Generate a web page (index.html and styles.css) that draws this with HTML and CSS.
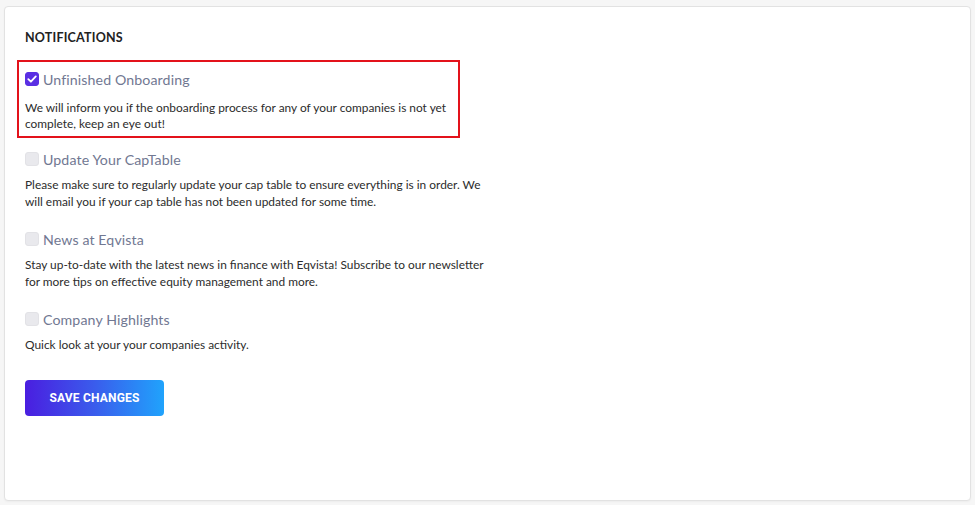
FILE: index.html
```html
<!DOCTYPE html>
<html lang="en">
<head>
<meta charset="utf-8">
<title>Notifications</title>
<link rel="stylesheet" href="styles.css">
</head>
<body>
<div class="card">
  <h2 class="heading">NOTIFICATIONS</h2>
  <div class="item item-marked">
    <label class="item-head">
      <span class="box box-checked">
        <svg viewBox="0 0 14 14" width="14" height="14"><path d="M3.3 7.2 L5.9 9.7 L10.8 4.4" fill="none" stroke="#fff" stroke-width="1.8" stroke-linecap="round" stroke-linejoin="round"/></svg>
      </span>
      <span class="title">Unfinished Onboarding</span>
    </label>
    <p class="desc desc-first">We will inform you if the onboarding process for any of your companies is not yet complete, keep an eye out!</p>
  </div>
  <div class="item">
    <label class="item-head">
      <span class="box"></span>
      <span class="title">Update Your CapTable</span>
    </label>
    <p class="desc">Please make sure to regularly update your cap table to ensure everything is in order. We will email you if your cap table has not been updated for some time.</p>
  </div>
  <div class="item">
    <label class="item-head">
      <span class="box"></span>
      <span class="title">News at Eqvista</span>
    </label>
    <p class="desc">Stay up-to-date with the latest news in finance with Eqvista! Subscribe to our newsletter for more tips on effective equity management and more.</p>
  </div>
  <div class="item item-last">
    <label class="item-head">
      <span class="box"></span>
      <span class="title">Company Highlights</span>
    </label>
    <p class="desc">Quick look at your your companies activity.</p>
  </div>
  <button class="save" type="button">SAVE CHANGES</button>
</div>
</body>
</html>
```

FILE: styles.css
```css
html, body {
  margin: 0;
  padding: 0;
}
body {
  background: #f6f6f6;
  font-family: Lato, "Open Sans", "Liberation Sans", sans-serif;
  width: 975px;
  height: 505px;
  overflow: hidden;
}
.card {
  box-sizing: border-box;
  margin: 6px 4px 0 4px;
  height: 495px;
  background: #fff;
  border: 1px solid #e2e2e2;
  border-radius: 4px;
  padding: 23px 20px 0 20px;
  box-shadow: 0 1px 2px rgba(0,0,0,0.04);
}
.heading {
  margin: 0 0 23px 0;
  font-size: 12.5px;
  line-height: 16px;
  font-weight: 700;
  color: #222;
  letter-spacing: 0.2px;
}
.item {
  position: relative;
  width: 466px;
  margin-bottom: 19px;
}
.item-marked {
  margin-bottom: 18px;
}
.item-marked::after {
  content: "";
  position: absolute;
  left: -8px;
  top: -9px;
  width: 439px;
  height: 74px;
  border: 2px solid #e3121b;
  pointer-events: none;
}
.item-last {
  margin-bottom: 26px;
}
.item-head {
  display: flex;
  align-items: center;
  gap: 4px;
  height: 20px;
}
.box {
  box-sizing: border-box;
  width: 14px;
  height: 14px;
  border-radius: 3px;
  background: #e9e9ed;
  border: 1px solid #e2e2e6;
  display: flex;
}
.box-checked {
  background: #5a2fe3;
  border-color: #5a2fe3;
}
.box-checked svg {
  margin: -1px;
}
.title {
  font-size: 14.2px;
  color: #717892;
  letter-spacing: 0.1px;
}
.desc {
  margin: 8px 0 0 0;
  font-size: 11.9px;
  line-height: 16.5px;
  color: #2c2c2c;
}
.desc-first {
  margin-top: 11px;
  line-height: 15.5px;
}
.save {
  display: block;
  width: 139px;
  height: 36px;
  border: none;
  border-radius: 4px;
  background: linear-gradient(90deg, #4a1ee0 0%, #3a5cec 50%, #20a3fc 100%);
  color: #fff;
  font-family: Roboto, "Liberation Sans", sans-serif;
  font-weight: 700;
  font-size: 12px;
  letter-spacing: 0.2px;
  padding: 0;
}
```
